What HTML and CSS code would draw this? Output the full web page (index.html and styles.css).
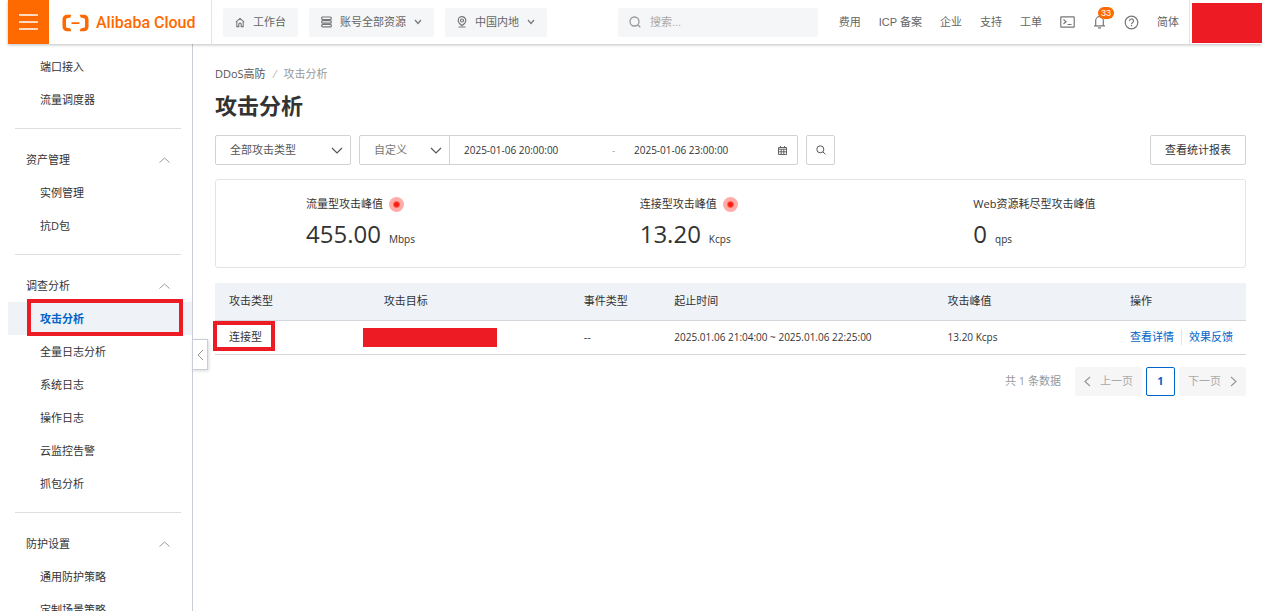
FILE: index.html
```html
<!DOCTYPE html>
<html lang="zh-CN">
<head>
<meta charset="utf-8">
<title>攻击分析</title>
<link rel="stylesheet" href="styles.css">
</head>
<body>
<div class="app">
  <header class="topbar">
    <button class="menu-btn" aria-label="菜单"><svg width="19" height="16" viewBox="0 0 19 16"><path d="M0 1h19M0 8h19M0 15h19" stroke="#fff" stroke-width="1.5"/></svg></button>
    <a class="brand" href="#">
      <svg width="27" height="18" viewBox="0 0 27 18"><path d="M9.300 .8H5A4.500 4.500 0 0 0 .5 5.300v7.400a4.500 4.500 0 0 0 4.500 4.500h4.300l-.9-2.600-3.300-.8a1.500 1.500 0 0 1-1.100-1.400V5.600A1.500 1.500 0 0 1 5.100 4.200l3.300-.8zM17.700 .8H22a4.500 4.500 0 0 1 4.500 4.500v7.400a4.500 4.500 0 0 1-4.500 4.500h-4.300l.9-2.600 3.300-.8a1.500 1.500 0 0 0 1.100-1.400V5.600A1.500 1.500 0 0 0 21.900 4.200l-3.300-.8zM9.500 8.200h8v1.700h-8z" fill="#ff6a00"/></svg>
      <span>Alibaba Cloud</span>
    </a>
    <div class="quick">
      <button class="chip"><svg class="ico" width="10" height="11" viewBox="0 0 11 11"><path d="M1 5l4.500-4L10 5M2 4.500V10h2.200V7.500a1.300 1.300 0 0 1 2.600 0V10H9V4.500"/></svg><span>工作台</span></button>
      <button class="chip"><svg class="ico" width="11" height="12" viewBox="0 0 11 12"><rect x=".7" y="1" width="9.600" height="2.500" rx="1"/><rect x=".7" y="4.700" width="9.600" height="2.500" rx="1"/><rect x=".7" y="8.400" width="9.600" height="2.500" rx="1"/></svg><span>账号全部资源</span><svg class="ico caret" width="8" height="6" viewBox="0 0 8 6"><path d="M1 1l3 3.500L7 1"/></svg></button>
      <button class="chip"><svg class="ico" width="10" height="12" viewBox="0 0 10 12"><path d="M5 9.500C2.500 7.700 1.200 6.200 1.200 4.400a3.800 3.800 0 0 1 7.600 0C8.800 6.200 7.500 7.700 5 9.500zM1.500 11h7"/><circle cx="5" cy="4.500" r="1.500"/></svg><span>中国内地</span><svg class="ico caret" width="8" height="6" viewBox="0 0 8 6"><path d="M1 1l3 3.500L7 1"/></svg></button>
    </div>
    <label class="search">
      <svg width="12" height="12" viewBox="0 0 12 12"><circle cx="5.500" cy="5.500" r="4.500"/><path d="M8.700 8.700L11.300 11.300"/></svg>
      <input type="text" placeholder="搜索..." aria-label="搜索">
    </label>
    <nav class="links">
      <a href="#">费用</a><a href="#">ICP 备案</a><a href="#">企业</a><a href="#">支持</a><a href="#">工单</a>
      <button aria-label="命令行"><svg class="ico" width="15" height="12" viewBox="0 0 15 12"><rect x=".8" y=".8" width="13.400" height="10.400" rx=".5"/><path d="M3.500 3.500L6 5.700 3.500 8M7.500 8.500h4"/></svg></button>
      <button class="bell" aria-label="消息"><svg class="ico" width="13" height="14" viewBox="0 0 13 14"><path d="M1 10.800h11M2.700 10.800V5.500a3.800 3.800 0 0 1 7.600 0v5.300M5 12.800h3"/></svg><span class="badge">33</span></button>
      <button aria-label="帮助"><svg class="ico" width="15" height="15" viewBox="0 0 15 15"><circle cx="7.500" cy="7.500" r="6.300"/><path d="M5.500 6.100a2 2 0 1 1 3 1.600c-.7.400-1 .7-1 1.500M7.500 10v1.300"/></svg></button>
      <a href="#">简体</a>
    </nav>
    <div class="account"><div class="redact"></div></div>
  </header>
  <div class="body">
    <aside class="side">
      <nav class="side-nav">
        <section><a href="#">端口接入</a><a href="#">流量调度器</a></section>
        <section>
          <button class="group">资产管理<svg width="11" height="6" viewBox="0 0 11 6"><path d="M.5 5.500l5-4.500 5 4.500"/></svg></button>
          <a href="#">实例管理</a><a href="#">抗D包</a>
        </section>
        <section>
          <button class="group">调查分析<svg width="11" height="6" viewBox="0 0 11 6"><path d="M.5 5.500l5-4.500 5 4.500"/></svg></button>
          <a href="#" class="active">攻击分析</a><a href="#">全量日志分析</a><a href="#">系统日志</a><a href="#">操作日志</a><a href="#">云监控告警</a><a href="#">抓包分析</a>
        </section>
        <section>
          <button class="group">防护设置<svg width="11" height="6" viewBox="0 0 11 6"><path d="M.5 5.500l5-4.500 5 4.500"/></svg></button>
          <a href="#">通用防护策略</a><a href="#">定制场景策略</a>
        </section>
      </nav>
      <button class="collapse" aria-label="收起"><svg width="7" height="12" viewBox="0 0 7 12"><path d="M6 1L1 6l5 5"/></svg></button>
    </aside>
    <main class="main">
      <nav class="crumbs"><a href="#">DDoS高防</a><i>/</i><span>攻击分析</span></nav>
      <h1>攻击分析</h1>
      <div class="filters">
        <div class="select type"><select aria-label="攻击类型"><option>全部攻击类型</option></select><svg width="12" height="7" viewBox="0 0 12 7"><path d="M1 1l5 5 5-5"/></svg></div>
        <div class="range">
          <div class="select period"><select aria-label="时间范围"><option>自定义</option></select><svg width="12" height="7" viewBox="0 0 12 7"><path d="M1 1l5 5 5-5"/></svg></div>
          <div class="dates">
            <input type="text" value="2025-01-06 20:00:00" aria-label="开始时间"><span>-</span><input type="text" value="2025-01-06 23:00:00" aria-label="结束时间">
            <svg width="9" height="9" viewBox="0 0 9 9"><path d="M.5 1.500h8v7h-8zM.5 3.200h8M.5 5.800h8M3.200 3v5.500M5.800 3v5.500M2.500 0v2M6.500 0v2" fill="none" stroke="#555" stroke-width=".9"/></svg>
          </div>
        </div>
        <button class="btn find" aria-label="查询"><svg width="10" height="10" viewBox="0 0 10 10"><circle cx="4.300" cy="4.300" r="3.500"/><path d="M7 7l2.500 2.300"/></svg></button>
        <button class="btn report">查看统计报表</button>
      </div>
      <div class="stats">
        <div class="stat"><div class="label">流量型攻击峰值<span class="pulse"></span></div><div class="value"><b>455.00</b><small>Mbps</small></div></div>
        <div class="stat"><div class="label">连接型攻击峰值<span class="pulse"></span></div><div class="value"><b>13.20</b><small>Kcps</small></div></div>
        <div class="stat"><div class="label">Web资源耗尽型攻击峰值</div><div class="value"><b>0</b><small>qps</small></div></div>
      </div>
      <table class="events">
        <thead><tr><th class="c-type">攻击类型</th><th class="c-target">攻击目标</th><th class="c-event">事件类型</th><th class="c-time">起止时间</th><th class="c-peak">攻击峰值</th><th>操作</th></tr></thead>
        <tbody><tr>
          <td class="marked">连接型</td><td class="hidden-ip"></td><td>--</td>
          <td class="num">2025.01.06 21:04:00 ~ 2025.01.06 22:25:00</td><td class="num">13.20 Kcps</td>
          <td><div class="actions"><a href="#">查看详情</a><a href="#">效果反馈</a></div></td>
        </tr></tbody>
      </table>
      <div class="pager">
        <span class="total">共 1 条数据</span>
        <button class="page" disabled><svg width="7" height="11" viewBox="0 0 7 11"><path d="M6 1L1 5.500l5 4.500"/></svg>上一页</button>
        <button class="page current">1</button>
        <button class="page" disabled>下一页<svg width="7" height="11" viewBox="0 0 7 11"><path d="M1 1l5 4.500L1 10"/></svg></button>
      </div>
    </main>
  </div>
</div>
</body>
</html>
```
FILE: styles.css
```css
*, *::before, *::after { box-sizing: border-box; }
body { margin: 0; color: #333; font: 11px/16px "Open Sans", "Noto Sans CJK SC", sans-serif; background: #fff; }
a { color: inherit; text-decoration: none; }
button, input, select { font: inherit; color: inherit; margin: 0; padding: 0; border: 0; background: none; border-radius: 0; }
svg { display: block; flex: none; fill: none; }
.app { height: 100vh; display: flex; flex-direction: column; overflow: hidden; padding-left: 8px; }

.topbar { flex: none; display: flex; align-items: center; height: 44px; position: relative; z-index: 2; background: #fff; box-shadow: 0 1px 3px rgba(0, 0, 0, .25); color: #666; font-family: "Liberation Sans", "Noto Sans CJK SC", sans-serif; }
.menu-btn { width: 41px; height: 44px; background: #ff6a00; display: grid; place-items: center; }
.brand { display: flex; align-items: center; gap: 7px; height: 44px; padding: 2px 0 0 13px; width: 163px; border-right: 1px solid #e5e5e5; color: #ff6a00; font: 500 16px/24px Roboto, sans-serif; white-space: nowrap; }
.quick { display: flex; gap: 11px; margin-left: 11px; }
.chip { display: flex; align-items: center; gap: 8px; height: 29px; padding: 0 12px; background: #f5f6f7; border-radius: 2px; white-space: nowrap; }
.ico { stroke: #777; stroke-width: 1.2; }
.search { display: flex; align-items: center; gap: 9px; width: 200px; height: 29px; margin-left: 71px; padding: 0 11px; background: #f5f6f7; border-radius: 2px; }
.search svg { stroke: #999; stroke-width: 1.3; }
.search input { flex: 1; min-width: 0; outline: 0; }
.search input::placeholder { color: #aaa; opacity: 1; }
.links { flex: 1; display: flex; align-items: center; justify-content: flex-end; gap: 18px; padding-right: 10px; white-space: nowrap; }
.bell { position: relative; }
.badge { position: absolute; left: 5px; top: -8px; padding: 0 3px; border-radius: 6px; background: #ff6a00; color: #fff; font-size: 9px; line-height: 12px; }
.account { align-self: stretch; border-left: 1px solid #e5e5e5; padding: 3px 0 1px 2px; }
.redact { width: 70px; height: 40px; background: #ed1c24; }

.body { flex: 1; min-height: 0; display: flex; }
.side { flex: none; width: 185px; position: relative; border-right: 1px solid #c9ced6; }
.side-nav { height: 100%; overflow: hidden; padding-top: 6px; }
.side-nav section + section { position: relative; margin-top: 12px; padding-top: 15px; }
.side-nav section + section::before { content: ""; position: absolute; top: 0; left: 7px; right: 11px; border-top: 1px solid #dedede; }
.side-nav a, .group { display: flex; align-items: center; height: 33px; padding-left: 32px; }
.side-nav .group { width: 100%; justify-content: space-between; padding: 0 22px 0 18px; }
.group svg { stroke: #999; }
.side-nav .active { position: relative; background: #eff2f7; color: #0064c8; font-weight: 700; }
.active::after { content: ""; position: absolute; inset: -3px 9px -1px 19px; border: 4px solid #ed1c24; }
.collapse { position: absolute; left: 184px; top: 295px; width: 16px; height: 31px; display: grid; place-items: center; background: #fff; border: 1px solid #c9ced6; box-shadow: 1px 1px 3px rgba(0, 0, 0, .15); }
.collapse svg { stroke: #999; }

.main { flex: 1; min-width: 0; padding: 22px 16px 0 22px; }
.crumbs { display: flex; gap: 7px; color: #999; }
.crumbs a { color: #555; }
.crumbs i { color: #bbb; }
h1 { margin: 7px 0 0; font-size: 22px; line-height: 32px; }
.filters { display: flex; gap: 8px; margin-top: 14px; }
.select { position: relative; height: 30px; }
.select select { width: 100%; height: 100%; padding: 0 14px; appearance: none; color: #555; }
.select svg { position: absolute; right: 7px; top: 11px; pointer-events: none; stroke: #555; stroke-width: 1.2; }
.type { width: 136px; border: 1px solid #d2d2d2; border-radius: 2px; }
.range { display: flex; width: 439px; height: 30px; border: 1px solid #d2d2d2; border-radius: 2px; }
.period { flex: none; width: 90px; height: 28px; border-right: 1px solid #d2d2d2; }
.period select { color: #777; }
.dates { flex: 1; display: flex; align-items: center; padding: 0 10px 0 14px; font-size: 10px; }
.dates input { width: 148px; outline: 0; }
.dates input + svg { margin-left: auto; }
.dates span { width: 22px; color: #aaa; }
.dates span + input { width: 130px; }
.btn { height: 30px; border: 1px solid #d2d2d2; border-radius: 2px; }
.find { width: 29px; display: grid; place-items: center; }
.find svg { stroke: #555; }
.report { margin-left: auto; padding: 0 14px; }

.stats { display: grid; grid-template-columns: repeat(3, 1fr); margin-top: 14px; padding: 16px 14px; border: 1px solid #e3e4e6; border-radius: 3px; }
.stat { padding-left: 76px; }
.label { display: flex; align-items: center; gap: 6px; }
.pulse { width: 15px; height: 15px; border-radius: 50%; background: radial-gradient(circle, #ff1c10 2px, #ffaca8 4px); }
.value { display: flex; align-items: baseline; gap: 8px; margin-top: 6px; padding-bottom: 1px; line-height: 32px; }
.value b { font-size: 24px; font-weight: 400; }
.value small { font-size: 10px; line-height: 16px; }

.events { width: 100%; margin-top: 15px; border-collapse: collapse; table-layout: fixed; }
.events th, .events td { padding: 0 0 0 14px; text-align: left; font-weight: 400; border-bottom: 1px solid #d3d6da; white-space: nowrap; }
.events th { height: 37px; background: #eff2f7; }
.events td { height: 34px; }
.events .num { font-size: 10px; }
.c-type { width: 15%; }
.c-target { width: 19.4%; }
.c-event { width: 8.8%; }
.c-time { width: 26.5%; }
.c-peak { width: 17.7%; }
.marked, .hidden-ip { position: relative; }
.marked::after { content: ""; position: absolute; left: -2px; top: 0; width: 62px; height: 30px; border: 4px solid #ed1c24; }
.hidden-ip::after { content: ""; position: absolute; left: -7px; top: 7px; width: 134px; height: 19px; background: #ed1c24; }
.actions { display: flex; color: #0064c8; }
.actions a + a { margin-left: 7px; padding-left: 7px; border-left: 1px solid #e3e4e6; }
.pager { display: flex; justify-content: flex-end; align-items: center; gap: 4px; margin-top: 12px; color: #999; }
.total { margin-right: 10px; }
.page { display: flex; align-items: center; justify-content: center; gap: 9px; min-width: 29px; height: 29px; padding: 0 9px; background: #f6f6f6; border-radius: 2px; color: #aaa; }
.page svg { stroke: #999; stroke-width: 1.2; }
.current { background: #fff; border: 1px solid #0064c8; color: #0064c8; font-weight: 700; }
```
